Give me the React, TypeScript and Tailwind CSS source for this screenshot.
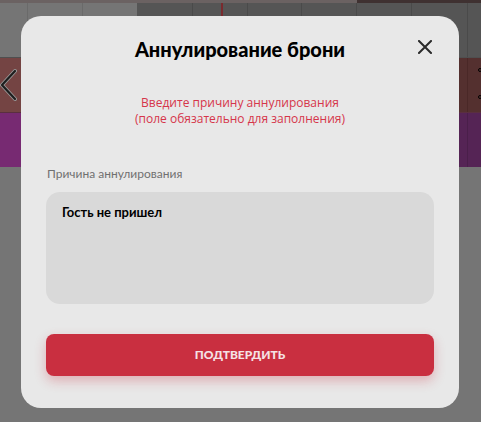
import React from "react";

export default function App() {
  return (
    <div className="relative w-[481px] h-[422px] overflow-hidden bg-[#757575]" style={{ fontFamily: "Lato, 'Noto Sans', sans-serif" }}>
      {/* background app (dimmed) */}
      <div className="flex flex-col">
        <div className="flex h-[3px]">
          <div className="w-[357px] bg-[#6b6262]" />
          <div className="flex-1 bg-[#3f3131]" />
        </div>
        <div className="relative flex h-[55px] border-b border-[#4f4f4f]">
          <div className="grid w-[137px] grid-cols-[28px_55px_54px] bg-[#757575]">
            <div className="border-r border-[#6a6a6a]" />
            <div className="border-r border-[#6a6a6a]" />
            <div />
          </div>
          <div className="grid flex-1 grid-cols-[56px_55px_54px_55px_55px_56px_13px] bg-[#555555]">
            <div className="border-r border-[#4a4a4a]" />
            <div className="border-r border-[#4a4a4a]" />
            <div className="border-r border-[#4a4a4a]" />
            <div className="border-r border-[#4a4a4a]" />
            <div className="border-r border-[#4a4a4a]" />
            <div className="border-r border-[#4a4a4a]" />
            <div />
          </div>
          <div className="absolute left-[221px] top-0 h-full w-[2px] bg-[#7a2a2e]" />
        </div>
        <div className="relative flex h-[55px] border-b border-[#5a2f40]">
          <div className="w-[137px] bg-[#744443]" />
          <div className="flex-1 bg-[#54302f] grid grid-cols-[330px_1px_1fr]">
            <div />
            <div className="bg-[#4a2827]" />
            <div />
          </div>
          <svg className="absolute left-0 top-[10px]" width="18" height="34" viewBox="0 0 18 34">
            <path d="M15 3 L2 17 L15 31" fill="none" stroke="#9a9a9a" strokeWidth="4" strokeLinecap="round" strokeLinejoin="round" />
            <path d="M15 3 L2 17 L15 31" fill="none" stroke="#1e1e1e" strokeWidth="2.2" strokeLinecap="round" strokeLinejoin="round" />
          </svg>
          <div className="absolute left-[478px] top-[10px] h-[4px] w-[4px] rounded-full border border-black" />
          <div className="absolute left-[478px] top-[37px] h-[4px] w-[4px] rounded-full border border-black" />
        </div>
        <div className="flex h-[54px]">
          <div className="w-[137px] bg-[#772a72]" />
          <div className="flex-1 bg-[#552455] grid grid-cols-[330px_1px_1fr]">
            <div />
            <div className="bg-[#4a1f4a]" />
            <div />
          </div>
        </div>
      </div>

      {/* modal */}
      <div className="absolute left-[21px] top-[16px] flex h-[392px] w-[438px] flex-col rounded-[20px] bg-[#e8e8e8] px-[25px] pt-[21px]">
        <button className="absolute right-[27px] top-[24px] flex h-[14px] w-[14px] items-center justify-center" aria-label="close">
          <svg width="14" height="14" viewBox="0 0 14 14">
            <path d="M1 1 L13 13 M13 1 L1 13" stroke="#2a2a2a" strokeWidth="2" strokeLinecap="square" />
          </svg>
        </button>
        <h2 className="text-center text-[20px] leading-[24px] font-black text-black">Аннулирование брони</h2>
        <p
          className="mt-[34px] text-center text-[12px] leading-[16px] text-[#d6354a]"
          style={{ fontFamily: "'Open Sans', 'Noto Sans', sans-serif" }}
        >
          Введите причину аннулирования
          <br />
          (поле обязательно для заполнения)
        </p>
        <label className="mt-[39px] pl-[1px] text-[12px] leading-[16px] text-[#707070]">Причина аннулирования</label>
        <textarea
          readOnly
          defaultValue="Гость не пришел"
          className="mt-[10px] h-[112px] w-full resize-none rounded-[14px] bg-[#d9d9d9] px-[16px] pt-[12px] text-[13px] leading-[16px] font-bold text-black outline-none"
          style={{ fontFamily: "Lato, 'Noto Sans', sans-serif" }}
        />
        <button className="mt-[30px] h-[42px] w-full rounded-[8px] bg-[#c92f40] text-[12px] font-black uppercase text-[#f5e2e5] shadow-[0_5px_12px_rgba(201,47,64,0.3)]">
          Подтвердить
        </button>
      </div>
    </div>
  );
}
